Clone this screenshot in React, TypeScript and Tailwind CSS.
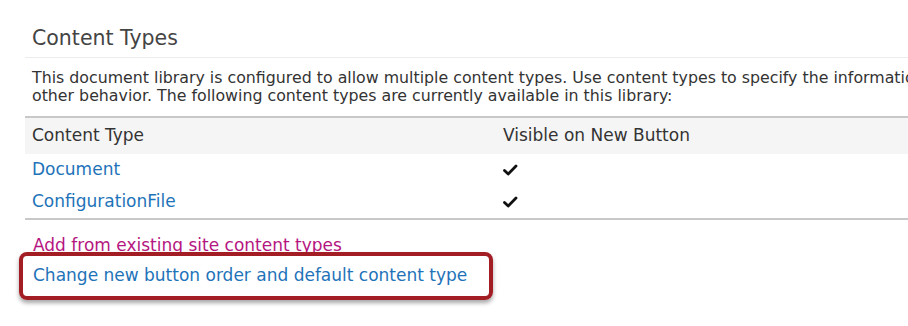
export default function App() {
  const rows = [
    { name: 'Document', visible: true },
    { name: 'ConfigurationFile', visible: true },
  ];

  return (
    <div
      className="relative w-[908px] h-[326px] overflow-hidden bg-white"
      style={{ fontFamily: '"DejaVu Sans", Verdana, sans-serif' }}
    >
      <div className="pl-[25px] pt-[26px]">
        {/* Heading */}
        <h2 className="pl-[7px] text-[20.5px] leading-[24px] text-[#444] whitespace-nowrap">Content Types</h2>
        <div className="mt-[7px] h-px bg-[#ececec]" />

        {/* Description */}
        <p className="pl-[7px] pt-[11px] text-[15.8px] leading-[18px] text-[#333] whitespace-nowrap">
          This document library is configured to allow multiple content types. Use content types to specify the information you want to display about an item, in addition to its policies, workflows, or
          <br />
          other behavior. The following content types are currently available in this library:
        </p>

        {/* Table */}
        <div className="mt-[11px] border-t-2 border-[#c8c8c8]">
          <div className="flex h-[36px] items-center bg-[#f5f5f5] text-[17px] text-[#333]">
            <div className="w-[478px] pl-[7px]">Content Type</div>
            <div>Visible on New Button</div>
          </div>
          {rows.map((row) => (
            <div key={row.name} className="flex h-[32px] items-center text-[17px]">
              <div className="w-[478px] pl-[7px] text-[#1e73b9]">{row.name}</div>
              <div className="text-black">
                {row.visible && (
                  <svg width="15" height="12" viewBox="0 0 15 12">
                    <path d="M1.5 6.5 L5.2 10 L13 2" stroke="#111" strokeWidth="2.8" fill="none" strokeLinecap="round" strokeLinejoin="round" />
                  </svg>
                )}
              </div>
            </div>
          ))}
        </div>
        <div className="h-[2px] bg-[#c8c8c8]" />

        {/* Links */}
        <div className="pl-[8px] pt-[10px] text-[17px] leading-[30px] whitespace-nowrap">
          <div className="text-[#b5167f]">Add from existing site content types</div>
          <div className="text-[#1e73b9]">Change new button order and default content type</div>
        </div>
      </div>

      {/* Highlight annotation */}
      <div className="absolute left-[19px] top-[252px] w-[474px] h-[48px] rounded-[8px] border-[4px] border-[#a31d24] shadow-[0_3px_4px_rgba(0,0,0,0.35)] pointer-events-none" />
    </div>
  );
}
